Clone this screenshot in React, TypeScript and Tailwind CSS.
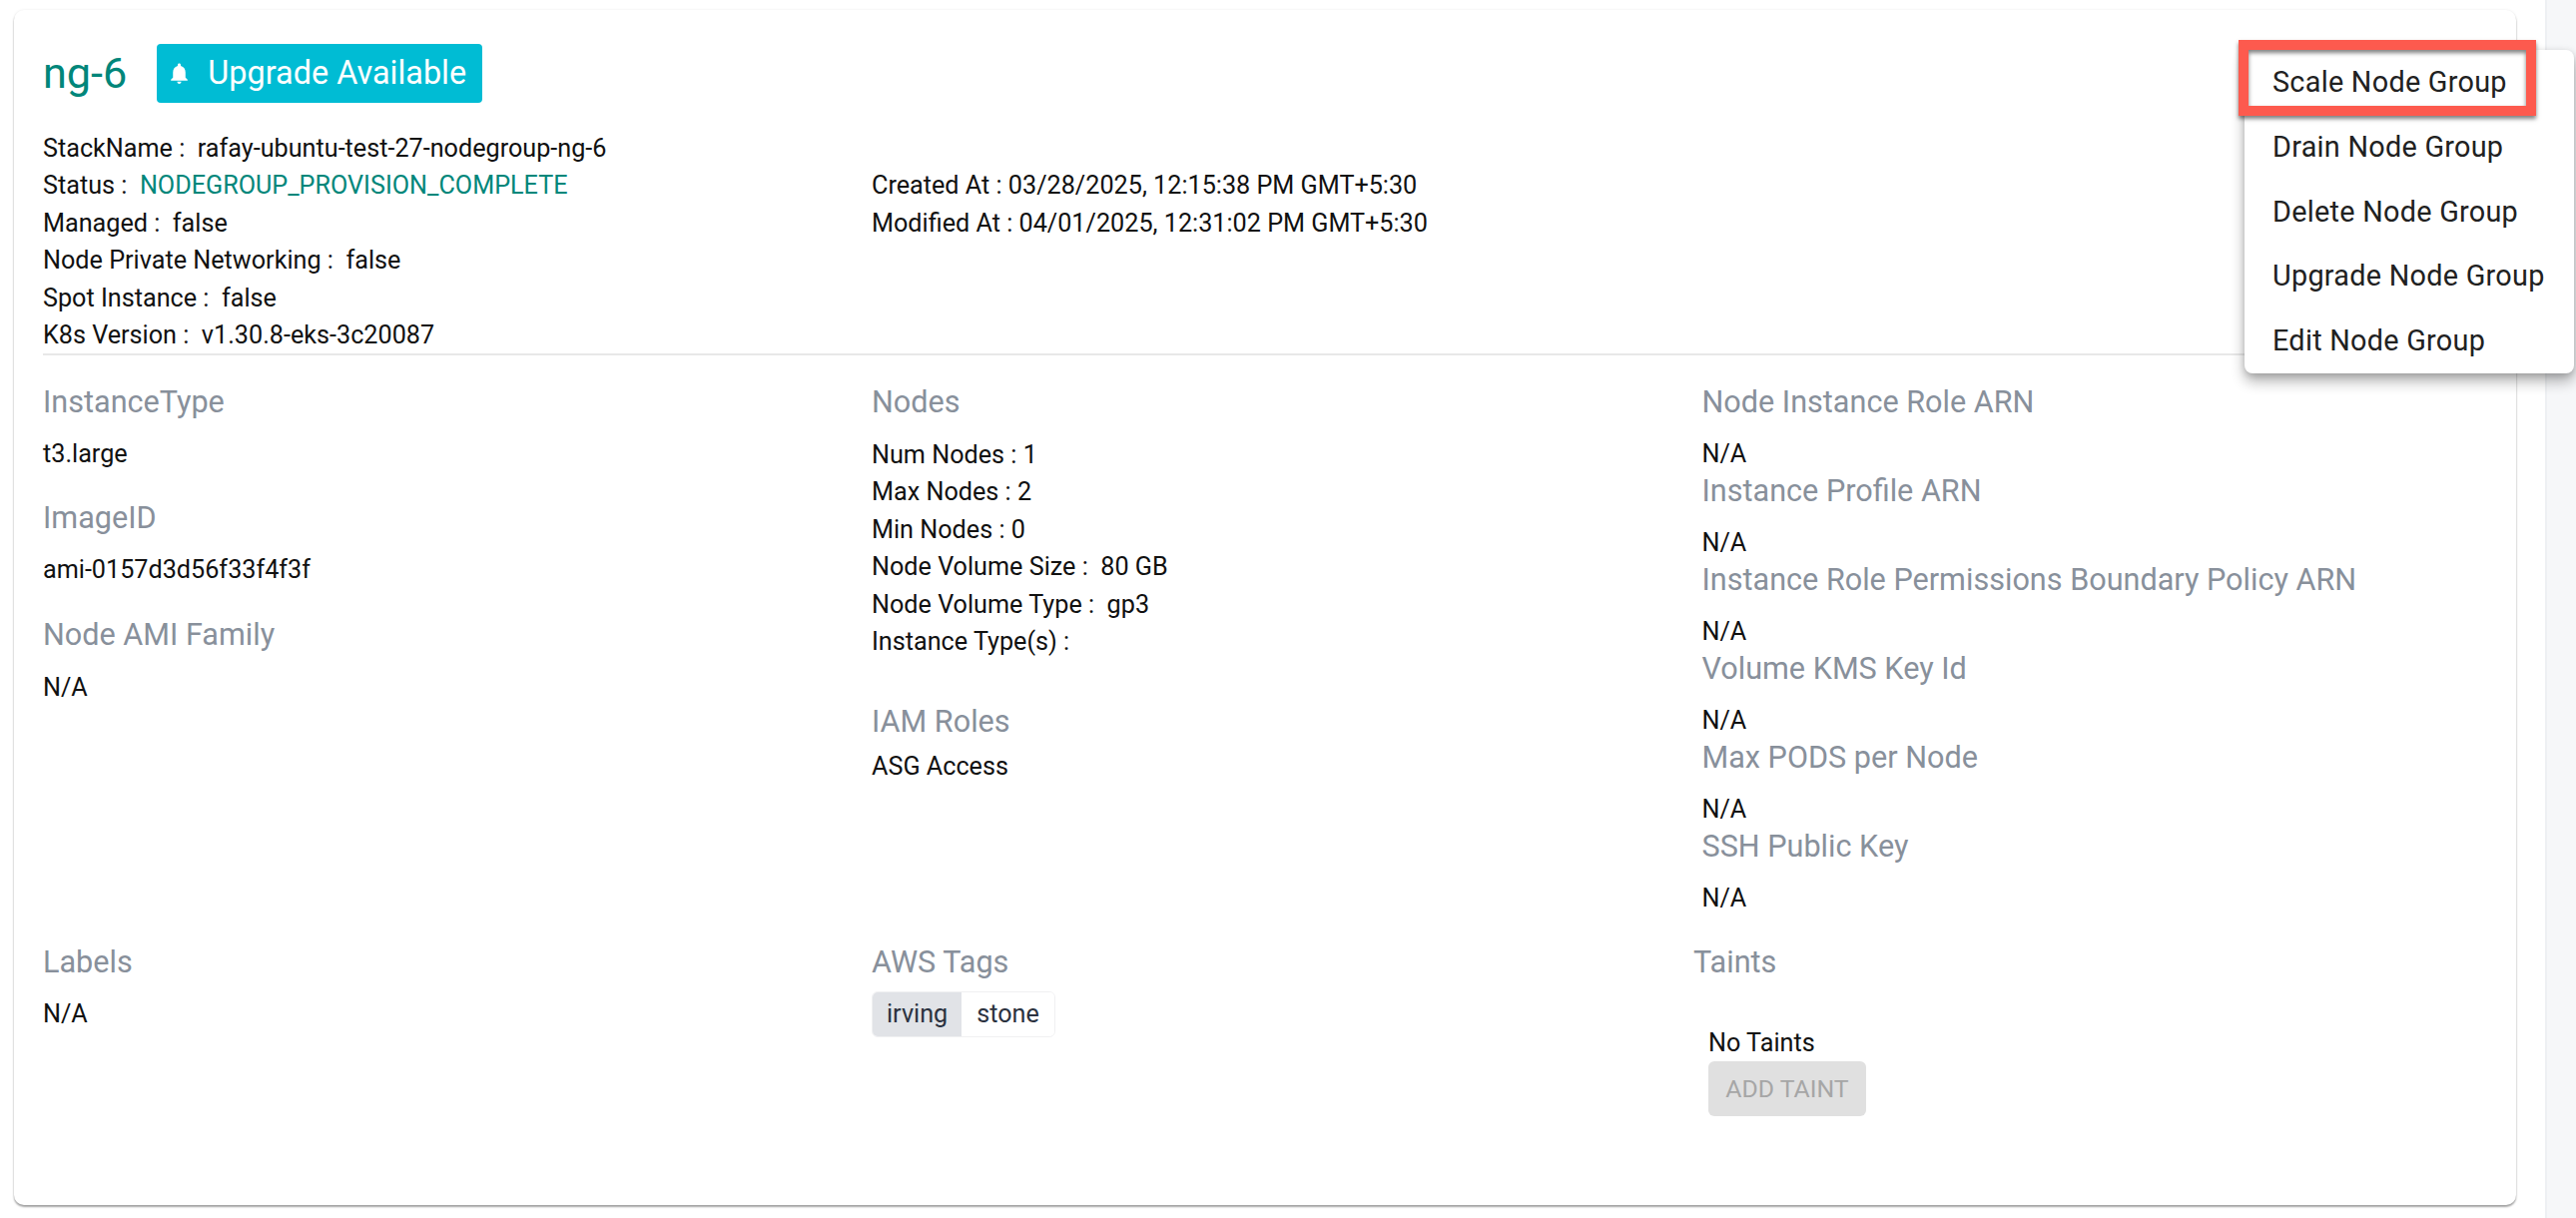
const info = [
  ['StackName :', 'rafay-ubuntu-test-27-nodegroup-ng-6'],
  ['Status :', 'NODEGROUP_PROVISION_COMPLETE'],
  ['Managed :', 'false'],
  ['Node Private Networking :', 'false'],
  ['Spot Instance :', 'false'],
  ['K8s Version :', 'v1.30.8-eks-3c20087'],
]

const nodes = [
  'Num Nodes : 1',
  'Max Nodes : 2',
  'Min Nodes : 0',
  'Node Volume Size :  80 GB',
  'Node Volume Type :  gp3',
  'Instance Type(s) :',
]

const arns = [
  'Node Instance Role ARN',
  'Instance Profile ARN',
  'Instance Role Permissions Boundary Policy ARN',
  'Volume KMS Key Id',
  'Max PODS per Node',
  'SSH Public Key',
]

const menu = ['Scale Node Group', 'Drain Node Group', 'Delete Node Group', 'Upgrade Node Group', 'Edit Node Group']

function Heading({ children }: { children: string }) {
  return <h6 className="h-[46px] text-[30.6px] leading-[46px] font-normal text-[#88909b]">{children}</h6>
}

function Row({ children }: { children: React.ReactNode }) {
  return <div className="h-[37.6px] text-[25.2px] leading-[37.6px] whitespace-pre text-[#111]">{children}</div>
}

export default function App() {
  return (
    <div className="flex h-[1220px] w-[2580px] overflow-hidden bg-white font-['Roboto',sans-serif]">
      <div className="w-[2549px] shrink-0 pt-[10px] pl-[14px]">
        <div className="relative h-[1197px] w-[2506px] rounded-[10px] bg-white pt-[34px] pl-[29px] shadow-[0_2px_2px_rgba(0,0,0,0.35),0_0_3px_rgba(0,0,0,0.08)]">
          <div className="flex h-[59px] items-center">
            <span className="text-[43.2px] leading-[59px] text-[#00867a]">ng-6</span>
            <span className="ml-[30px] flex h-[59px] w-[326px] items-center rounded-[4px] bg-[#00bcd4] pl-[10px] text-[32.4px] text-white">
              <svg viewBox="0 0 24 24" className="h-[25px] w-[25px] fill-white">
                <path d="M12 22c1.1 0 2-.9 2-2h-4c0 1.1.9 2 2 2zm6-6v-5c0-3.07-1.63-5.64-4.5-6.32V4c0-.83-.67-1.5-1.5-1.5s-1.5.67-1.5 1.5v.68C7.64 5.36 6 7.92 6 11v5l-2 2v1h16v-1l-2-2z" />
              </svg>
              <span className="ml-[16px]">Upgrade Available</span>
            </span>
          </div>

          <div className="mt-[26.5px] grid h-[226px] w-[2448px] grid-cols-[830px_831px_1fr] border-b-2 border-[#e8e8e8]">
            <div>
              {info.map(([label, value]) => (
                <Row key={label}>
                  {label}
                  {'  '}
                  <span className={label === 'Status :' ? 'text-[#00867a]' : ''}>{value}</span>
                </Row>
              ))}
            </div>
            <div className="pt-[37.6px]">
              <Row>Created At : 03/28/2025, 12:15:38 PM GMT+5:30</Row>
              <Row>Modified At : 04/01/2025, 12:31:02 PM GMT+5:30</Row>
            </div>
          </div>

          <div className="grid h-[579px] grid-cols-[830px_831.5px_1fr] pt-[24px]">
            <div>
              <Heading>InstanceType</Heading>
              <div className="mt-[10px]"><Row>t3.large</Row></div>
              <div className="mt-[23px]"><Heading>ImageID</Heading></div>
              <div className="mt-[10px]"><Row>ami-0157d3d56f33f4f3f</Row></div>
              <div className="mt-[23px]"><Heading>Node AMI Family</Heading></div>
              <div className="mt-[11px]"><Row>N/A</Row></div>
            </div>
            <div>
              <Heading>Nodes</Heading>
              <div className="mt-[11px]">
                {nodes.map((n) => (
                  <Row key={n}>{n}</Row>
                ))}
              </div>
              <div className="mt-[38px]"><Heading>IAM Roles</Heading></div>
              <div className="mt-[3px]"><Row>ASG Access</Row></div>
            </div>
            <div>
              {arns.map((a) => (
                <div key={a} className="h-[89px]">
                  <Heading>{a}</Heading>
                  <div className="mt-[10px]"><Row>N/A</Row></div>
                </div>
              ))}
            </div>
          </div>

          <div className="grid grid-cols-[830px_823px_1fr] pt-[6px]">
            <div>
              <Heading>Labels</Heading>
              <div className="mt-[10px]"><Row>N/A</Row></div>
            </div>
            <div>
              <Heading>AWS Tags</Heading>
              <div className="mt-[6px] inline-flex h-[46px] overflow-hidden rounded-[6px] border border-[#f0f0f2] text-[25.2px] leading-[44px] text-[#2b3240]">
                <span className="bg-[#e1e3e7] px-[14px]">irving</span>
                <span className="bg-white px-[15px]">stone</span>
              </div>
            </div>
            <div>
              <Heading>Taints</Heading>
              <div className="mt-[39px] pl-[15px]">
                <Row>No Taints</Row>
                <button className="flex h-[55px] w-[158px] items-center justify-center rounded-[6px] bg-[#e0e0e0] text-[24.8px] text-[#a6a6a6]">
                  ADD TAINT
                </button>
              </div>
            </div>
          </div>

          <div className="absolute top-[40px] left-[2234px] w-[330px] rounded-[8px] bg-white shadow-[0_8px_14px_rgba(0,0,0,0.3),0_2px_6px_rgba(0,0,0,0.15)]">
            {menu.map((m) => (
              <div key={m} className="h-[64.8px] pl-[28px] text-[28.8px] leading-[64px] tracking-[0.27px] whitespace-nowrap text-[#212121]">
                {m}
              </div>
            ))}
          </div>
          <div className="absolute top-[30px] left-[2228px] h-[76px] w-[298px] border-[10px] border-[#fd5a4e] shadow-[0_3px_4px_rgba(0,0,0,0.5),inset_0_3px_4px_rgba(0,0,0,0.5)]" />
        </div>
      </div>
      <div className="flex-1 border-l-2 border-[#eef0f3] bg-[#f6f7f9]" />
    </div>
  )
}
